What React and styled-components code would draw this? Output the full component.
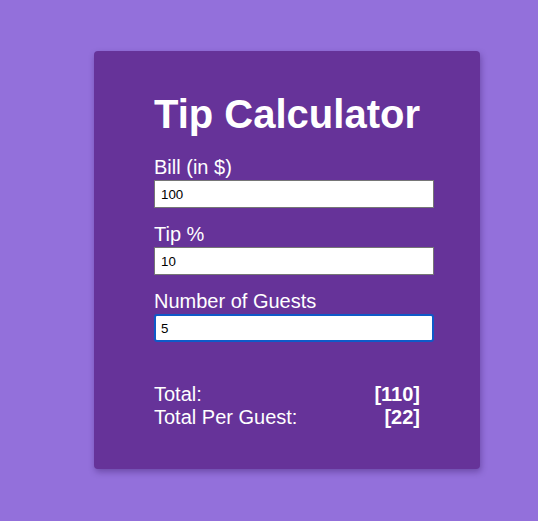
import React, { useState } from "react";
import styled, { createGlobalStyle, css } from "styled-components";

const GlobalStyle = createGlobalStyle`
  html, body {
    margin: 0;
    padding: 0;
    background: #9370db;
    font-family: "Liberation Sans", Arial, Helvetica, sans-serif;
  }
`;

const Page = styled.div`
  min-height: 521px;
  padding: 51px 0 0 94px;
  box-sizing: border-box;
`;

const Card = styled.div`
  width: 386px;
  box-sizing: border-box;
  padding: 40px 46px 40px 60px;
  background: #663399;
  border-radius: 4px;
  box-shadow: 1px 3px 6px rgba(40, 10, 80, 0.35);
  color: #fff;
`;

const Title = styled.h1`
  margin: 0 0 18px;
  font-size: 40px;
  line-height: 46px;
  font-weight: 700;
`;

const Field = styled.div`
  display: flex;
  flex-direction: column;
  gap: 1px;
  margin-bottom: 14px;
`;

const Label = styled.label`
  font-size: 20px;
  line-height: 24px;
`;

const Input = styled.input`
  width: 280px;
  height: 28px;
  box-sizing: border-box;
  margin: 0;
  padding: 0 6px;
  border: 1px solid #767676;
  border-radius: 0;
  background: #fff;
  color: #000;
  font-family: "Liberation Sans", Arial, sans-serif;
  font-size: 13.3px;
  outline: none;
  ${(p) =>
    p.$active &&
    css`
      border: 2px solid #0f5ac8;
      border-radius: 3px;
      padding: 0 5px;
    `}
`;

const Totals = styled.div`
  margin-top: 41px;
  padding-right: 14px;
`;

const TotalRow = styled.div`
  display: flex;
  justify-content: space-between;
  font-size: 20px;
  line-height: 23px;
`;

const Value = styled.span`
  font-weight: 700;
`;

export default function App() {
  const [bill, setBill] = useState("100");
  const [tip, setTip] = useState("10");
  const [guests, setGuests] = useState("5");
  const total = Number(bill) + (Number(bill) * Number(tip)) / 100;
  const perGuest = total / Number(guests);
  return (
    <>
      <GlobalStyle />
      <Page>
        <Card>
          <Title>Tip Calculator</Title>
          <Field>
            <Label htmlFor="bill">Bill (in $)</Label>
            <Input id="bill" value={bill} onChange={(e) => setBill(e.target.value)} />
          </Field>
          <Field>
            <Label htmlFor="tip">Tip %</Label>
            <Input id="tip" value={tip} onChange={(e) => setTip(e.target.value)} />
          </Field>
          <Field>
            <Label htmlFor="guests">Number of Guests</Label>
            <Input
              id="guests"
              $active
              value={guests}
              onChange={(e) => setGuests(e.target.value)}
            />
          </Field>
          <Totals>
            <TotalRow>
              <span>Total:</span>
              <Value>[{total}]</Value>
            </TotalRow>
            <TotalRow>
              <span>Total Per Guest:</span>
              <Value>[{perGuest}]</Value>
            </TotalRow>
          </Totals>
        </Card>
      </Page>
    </>
  );
}
